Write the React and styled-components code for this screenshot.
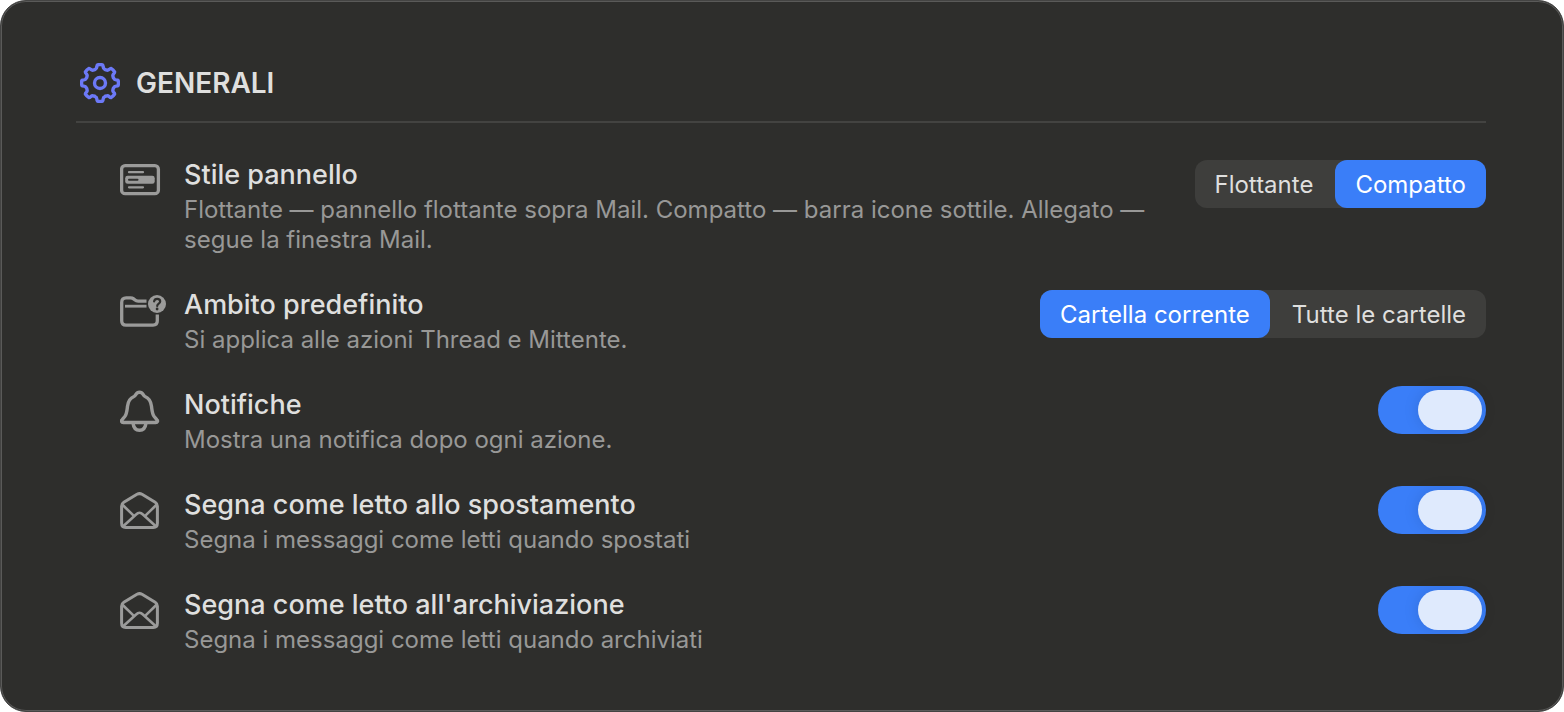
import React, { useState } from 'react';
import styled, { createGlobalStyle } from 'styled-components';

const GlobalStyle = createGlobalStyle`
  * {
    box-sizing: border-box;
  }

  body {
    margin: 0;
    background: #ffffff;
    font-family: Inter, 'Liberation Sans', sans-serif;
  }
`;

const Panel = styled.main`
  min-height: 100vh;
  padding: 58px 77px 54px 75px;
  color: #dfdfde;
  background: #2e2e2c;
  border: 1px solid #444443;
  border-radius: 26px;
  box-shadow: inset 0 0 0 1px #5a5a59;
`;

const Header = styled.header`
  display: flex;
  align-items: center;
  gap: 16px;
  padding: 0 4px 14px;
  border-bottom: 2px solid #434341;
`;

const Heading = styled.h1`
  margin: 0;
  font-size: 28px;
  font-weight: 600;
  line-height: 48px;
`;

const Settings = styled.div`
  display: flex;
  flex-direction: column;
  gap: 31px;
  padding: 33px 0 0 44px;
`;

const Row = styled.section`
  display: flex;
  align-items: flex-start;
`;

const IconSlot = styled.div`
  flex: none;
  width: 64px;
  color: #9b9b9a;

  svg {
    display: block;
  }
`;

const Copy = styled.div`
  flex: 1;
  padding: 3px 44px 0 0;
`;

const Title = styled.label`
  display: block;
  margin-bottom: 4px;
  font-size: 27px;
  font-weight: 500;
  line-height: 32px;
`;

const Description = styled.p`
  margin: 0;
  color: #989897;
  font-size: 24px;
  line-height: 30px;
`;

const Segments = styled.div`
  display: flex;
  flex: none;
  gap: 2px;
  margin-top: 4px;
  background: #3e3e3c;
  border-radius: 12px;
`;

const Segment = styled.button`
  height: 48px;
  padding: 2px 20px 0;
  color: ${({ $active }) => ($active ? '#ffffff' : '#dfdfde')};
  font-family: inherit;
  font-size: 24px;
  line-height: 46px;
  background: ${({ $active }) => ($active ? '#3a7ef8' : 'transparent')};
  border: 0;
  border-radius: 12px;
  cursor: pointer;
`;

const Switch = styled.input`
  display: flex;
  flex: none;
  appearance: none;
  width: 108px;
  height: 48px;
  margin: 0;
  padding: 4px;
  justify-content: ${({ checked }) => (checked ? 'flex-end' : 'flex-start')};
  background: ${({ checked }) => (checked ? '#3a7ef8' : '#4a4a48')};
  border-radius: 24px;
  cursor: pointer;

  &::before {
    content: '';
    width: 64px;
    height: 40px;
    background: #dfeafd;
    border-radius: 20px;
    box-shadow: 0 0 16px rgba(0, 0, 0, 0.12);
  }
`;

// Eight-toothed outline, one tooth every 45 degrees
const gearPath = () => {
  const at = (deg, r) => {
    const a = (deg * Math.PI) / 180;
    return `${(20 + r * Math.sin(a)).toFixed(2)} ${(20 - r * Math.cos(a)).toFixed(2)}`;
  };
  let d = `M${at(-8, 18.3)}`;
  for (let t = 0; t < 360; t += 45) {
    d += `Q${at(t, 18.7)} ${at(t + 8, 18.3)}`;
    d += `Q${at(t + 10, 18)} ${at(t + 11, 16.4)}`;
    d += `Q${at(t + 13, 14.7)} ${at(t + 18, 14.6)}`;
    d += `Q${at(t + 22.5, 14)} ${at(t + 27, 14.6)}`;
    d += `Q${at(t + 32, 14.7)} ${at(t + 34, 16.4)}`;
    d += `Q${at(t + 35, 18)} ${at(t + 37, 18.3)}`;
  }
  return `${d}Z`;
};

const GearIcon = () => (
  <svg width="40" height="40" viewBox="0 0 40 40" fill="none" stroke="#6c79f7" strokeWidth="3.4" strokeLinejoin="round" aria-hidden="true">
    <path d={gearPath()} />
    <circle cx="20" cy="20" r="5.5" />
  </svg>
);

const PanelIcon = () => (
  <svg width="48" height="48" viewBox="0 0 48 48" fill="none" aria-hidden="true">
    <rect x="1.6" y="9.7" width="36.8" height="28" rx="3.5" stroke="currentColor" strokeWidth="3.3" />
    <path d="M9 16.2H23M9 31.3H23" stroke="currentColor" strokeWidth="2.2" strokeLinecap="round" />
    <rect x="5.2" y="19.8" width="29.5" height="8" rx="2.4" fill="currentColor" />
    <path d="M9 23.8H17.5" stroke="#2e2e2c" strokeWidth="2" strokeLinecap="round" />
  </svg>
);

const FolderIcon = () => (
  <svg width="48" height="48" viewBox="0 0 48 48" fill="none" stroke="currentColor" strokeWidth="3.3" aria-hidden="true">
    <path d="M26.5 15.2H18.2C16.5 15.2 15.8 14.8 14.7 13.8L13.6 12.9C12.6 12.1 11.9 11.9 10.5 11.9H6.2C3.2 11.9 1.7 13.4 1.7 16.4V34.7C1.7 37.6 3.2 39.1 6 39.1H33C35.8 39.1 37.3 37.6 37.3 34.8V28.6" />
    <path d="M5 20.2H26.5" strokeWidth="2.8" />
    <circle cx="37" cy="18" r="9" fill="currentColor" stroke="none" />
    <path d="M34.1 15.4C34.4 13.7 35.6 12.9 37.2 12.9C39 12.9 40.2 13.9 40.2 15.5C40.2 17.7 37.2 17.6 37.2 20" stroke="#2e2e2c" strokeWidth="2.2" strokeLinecap="round" />
    <circle cx="37.1" cy="23" r="1.4" fill="#2e2e2c" stroke="none" />
  </svg>
);

const BellIcon = () => (
  <svg width="48" height="48" viewBox="0 0 48 48" fill="none" stroke="currentColor" strokeWidth="3.4" strokeLinejoin="round" aria-hidden="true">
    <path d="M3.3 36.5H35.7C37.5 36.5 38 34.9 37 33.8L34.2 30.5C32.2 28 32.1 25.2 31.5 20.3C30.9 15.3 28.9 12 25 10.5C23.7 10 23.8 9.6 23.1 8.4C22.3 7 21.1 6.2 19.5 6.2C17.9 6.2 16.7 7 15.9 8.4C15.2 9.6 15.3 10 14 10.5C10.1 12 8.1 15.3 7.5 20.3C6.9 25.2 6.8 28 4.8 30.5L2 33.8C1 34.9 1.5 36.5 3.3 36.5Z" />
    <path d="M13 37C13.5 41.7 16 44.3 19.5 44.3C23 44.3 25.5 41.7 26 37" />
  </svg>
);

const EnvelopeIcon = () => (
  <svg width="48" height="48" viewBox="0 0 48 48" fill="none" stroke="currentColor" strokeWidth="3" strokeLinejoin="round" aria-hidden="true">
    <path d="M1.6 20.2C1.6 18.3 2.2 17.3 3.8 16.3L17 8.3C19 7.2 20 7.2 22 8.3L35.2 16.3C36.8 17.3 37.4 18.3 37.4 20.2V37C37.4 40 36.1 41.4 33.3 41.4H5.7C2.9 41.4 1.6 40 1.6 37Z" />
    <path d="M2.2 18.5L14.4 30.4M36.8 18.5L24.6 30.4" strokeWidth="2.6" />
    <path d="M3.2 40.2L15.8 28.7C18.6 26.1 20.4 26.1 23.2 28.7L35.8 40.2" strokeWidth="2.6" />
  </svg>
);

const SegmentRow = ({ id, icon, title, description, options, initial }) => {
  const [selected, setSelected] = useState(initial);

  return (
    <Row>
      <IconSlot>{icon}</IconSlot>
      <Copy>
        <Title as="div" id={id}>{title}</Title>
        <Description>{description}</Description>
      </Copy>
      <Segments role="group" aria-labelledby={id}>
        {options.map((option) => (
          <Segment
            key={option}
            type="button"
            $active={option === selected}
            aria-pressed={option === selected}
            onClick={() => setSelected(option)}
          >
            {option}
          </Segment>
        ))}
      </Segments>
    </Row>
  );
};

const SwitchRow = ({ id, icon, title, description }) => {
  const [on, setOn] = useState(true);

  return (
    <Row>
      <IconSlot>{icon}</IconSlot>
      <Copy>
        <Title htmlFor={id}>{title}</Title>
        <Description>{description}</Description>
      </Copy>
      <Switch id={id} type="checkbox" role="switch" checked={on} onChange={() => setOn(!on)} />
    </Row>
  );
};

const App = () => (
  <>
    <GlobalStyle />
    <Panel>
      <Header>
        <GearIcon />
        <Heading>GENERALI</Heading>
      </Header>
      <Settings>
        <SegmentRow
          id="panel-style"
          icon={<PanelIcon />}
          title="Stile pannello"
          description="Flottante — pannello flottante sopra Mail. Compatto — barra icone sottile. Allegato — segue la finestra Mail."
          options={['Flottante', 'Compatto']}
          initial="Compatto"
        />
        <SegmentRow
          id="default-scope"
          icon={<FolderIcon />}
          title="Ambito predefinito"
          description="Si applica alle azioni Thread e Mittente."
          options={['Cartella corrente', 'Tutte le cartelle']}
          initial="Cartella corrente"
        />
        <SwitchRow
          id="notifications"
          icon={<BellIcon />}
          title="Notifiche"
          description="Mostra una notifica dopo ogni azione."
        />
        <SwitchRow
          id="read-on-move"
          icon={<EnvelopeIcon />}
          title="Segna come letto allo spostamento"
          description="Segna i messaggi come letti quando spostati"
        />
        <SwitchRow
          id="read-on-archive"
          icon={<EnvelopeIcon />}
          title="Segna come letto all'archiviazione"
          description="Segna i messaggi come letti quando archiviati"
        />
      </Settings>
    </Panel>
  </>
);

export default App;
